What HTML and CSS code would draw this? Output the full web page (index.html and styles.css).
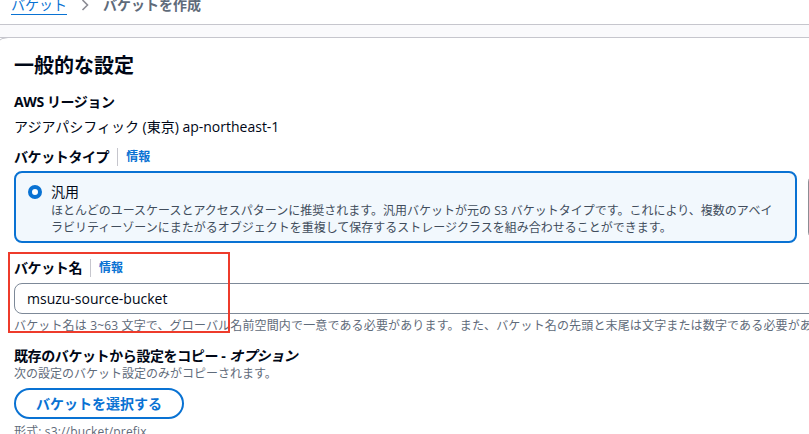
FILE: index.html
```html
<!DOCTYPE html>
<html lang="ja">
<head>
<meta charset="utf-8">
<title>バケットを作成</title>
<link rel="stylesheet" href="styles.css">
</head>
<body>
<nav class="breadcrumb">
  <a class="crumb-link" href="#">バケット</a>
  <svg class="crumb-sep" width="8" height="12" viewBox="0 0 8 12"><path d="M1.5 1 L6.5 6 L1.5 11" fill="none" stroke="#8c8c94" stroke-width="1.6"/></svg>
  <span class="crumb-current">バケットを作成</span>
</nav>
<div class="band"></div>
<section class="card">
  <h2 class="card-title">一般的な設定</h2>
  <div class="field">
    <div class="label">AWS リージョン</div>
    <div class="value">アジアパシフィック (東京) ap-northeast-1</div>
  </div>
  <div class="field">
    <div class="label">バケットタイプ<span class="divider"></span><a class="info" href="#">情報</a></div>
    <div class="tiles">
      <div class="tile tile-active">
        <span class="radio"></span>
        <div class="tile-body">
          <div class="tile-title">汎用</div>
          <div class="tile-desc">ほとんどのユースケースとアクセスパターンに推奨されます。汎用バケットが元の S3 バケットタイプです。これにより、複数のアベイラビリティーゾーンにまたがるオブジェクトを重複して保存するストレージクラスを組み合わせることができます。</div>
        </div>
      </div>
      <div class="tile tile-other"></div>
    </div>
  </div>
  <div class="field field-name">
    <div class="label">バケット名<span class="divider"></span><a class="info" href="#">情報</a></div>
    <div class="input">msuzu-source-bucket</div>
    <div class="hint">バケット名は 3~63 文字で、グローバル名前空間内で一意である必要があります。また、バケット名の先頭と末尾は文字または数字である必要があります。</div>
    <div class="highlight"></div>
  </div>
  <div class="field field-copy">
    <div class="label">既存のバケットから設定をコピー - <em>オプション</em></div>
    <div class="sub">次の設定のバケット設定のみがコピーされます。</div>
    <button class="btn">バケットを選択する</button>
    <div class="hint">形式: s3://bucket/prefix</div>
  </div>
</section>
</body>
</html>
```
FILE: styles.css
```css
* { box-sizing: border-box; }
html, body { margin: 0; padding: 0; background: #ffffff; overflow: hidden; }
body {
  width: 809px; height: 434px;
  font-family: "Open Sans", "Noto Sans CJK JP", sans-serif;
  color: #000716;
  font-size: 14px;
  line-height: 20px;
}
.breadcrumb {
  display: flex; align-items: center; gap: 12px;
  height: 32px; margin-top: -7px; padding: 0 11px 7px;
  border-bottom: 1px solid #c6c6cd;
  font-weight: 700;
  white-space: nowrap;
}
.crumb-link { color: #0972d3; text-decoration: underline; text-underline-offset: 4px; text-decoration-thickness: 1px; font-weight: 400; }
.crumb-current { color: #5f6b7a; }
.crumb-sep { margin-left: 2px; margin-right: 2px; }
.band { height: 13px; background: #fafafc; border-bottom: 1px solid #c6c6cd; }
.card {
  margin-left: -8px; margin-top: -1px;
  border: 1px solid #c6c6cd; border-radius: 16px 0 0 0;
  padding: 14px 0 0 21px;
  width: 900px; height: 420px;
}
.card-title { margin: 0 0 12px; font-size: 20px; line-height: 28px; font-weight: 700; }
.field { margin-bottom: 10px; }
.label { font-weight: 700; display: flex; align-items: center; height: 20px; white-space: nowrap; letter-spacing: -0.4px; }
.label em { font-style: italic; margin-left: 4px; }
.value { margin-top: 5px; margin-bottom: 5px; }
.divider { display: inline-block; width: 1px; height: 18px; background: #c6c6cd; margin: 0 8px 0 8px; }
.info { color: #0972d3; font-size: 12px; text-decoration: none; font-weight: 700; letter-spacing: 0; }
.tiles { display: flex; gap: 11px; margin-top: 4px; }
.tile { border-radius: 8px; height: 72px; flex-shrink: 0; }
.tile-active {
  width: 783px; border: 2px solid #0972d3; background: #f2f8fd;
  display: flex; padding: 9px 12px 0 12px; gap: 9px;
}
.tile-other { width: 40px; border: 1px solid #8c8c94; background: #fff; margin-top: 3px; height: 66px; }
.radio {
  width: 14px; height: 14px; border-radius: 50%;
  border: 4px solid #0972d3; background: #fff; margin-top: 3px; flex-shrink: 0;
}
.tile-title { font-size: 14px; line-height: 20px; }
.tile-desc { font-size: 12px; line-height: 17px; color: #414d5c; }
.field-name { position: relative; margin-top: 15px; }
.input {
  margin-top: 5px; height: 31px; width: 820px;
  border: 1px solid #7d8998; border-radius: 8px;
  padding: 4px 12px; line-height: 21px;
}
.hint { font-size: 12px; line-height: 16px; color: #5f6b7a; margin-top: 4px; white-space: nowrap; letter-spacing: 0.15px; }
.highlight {
  position: absolute; left: -6px; top: -6px; width: 222px; height: 81px;
  border: 2px solid #ee3b2b;
}
.field-copy { margin-top: 12px; }
.sub { font-size: 12px; line-height: 16px; color: #5f6b7a; }
.btn {
  margin-top: 6px; height: 31px; width: 170px;
  border: 2px solid #0972d3; border-radius: 20px; background: #fff;
  color: #0972d3; font: inherit; font-weight: 700; font-size: 14px;
  display: flex; align-items: center; justify-content: center;
}
.field-copy .hint { margin-top: 5px; }
```
